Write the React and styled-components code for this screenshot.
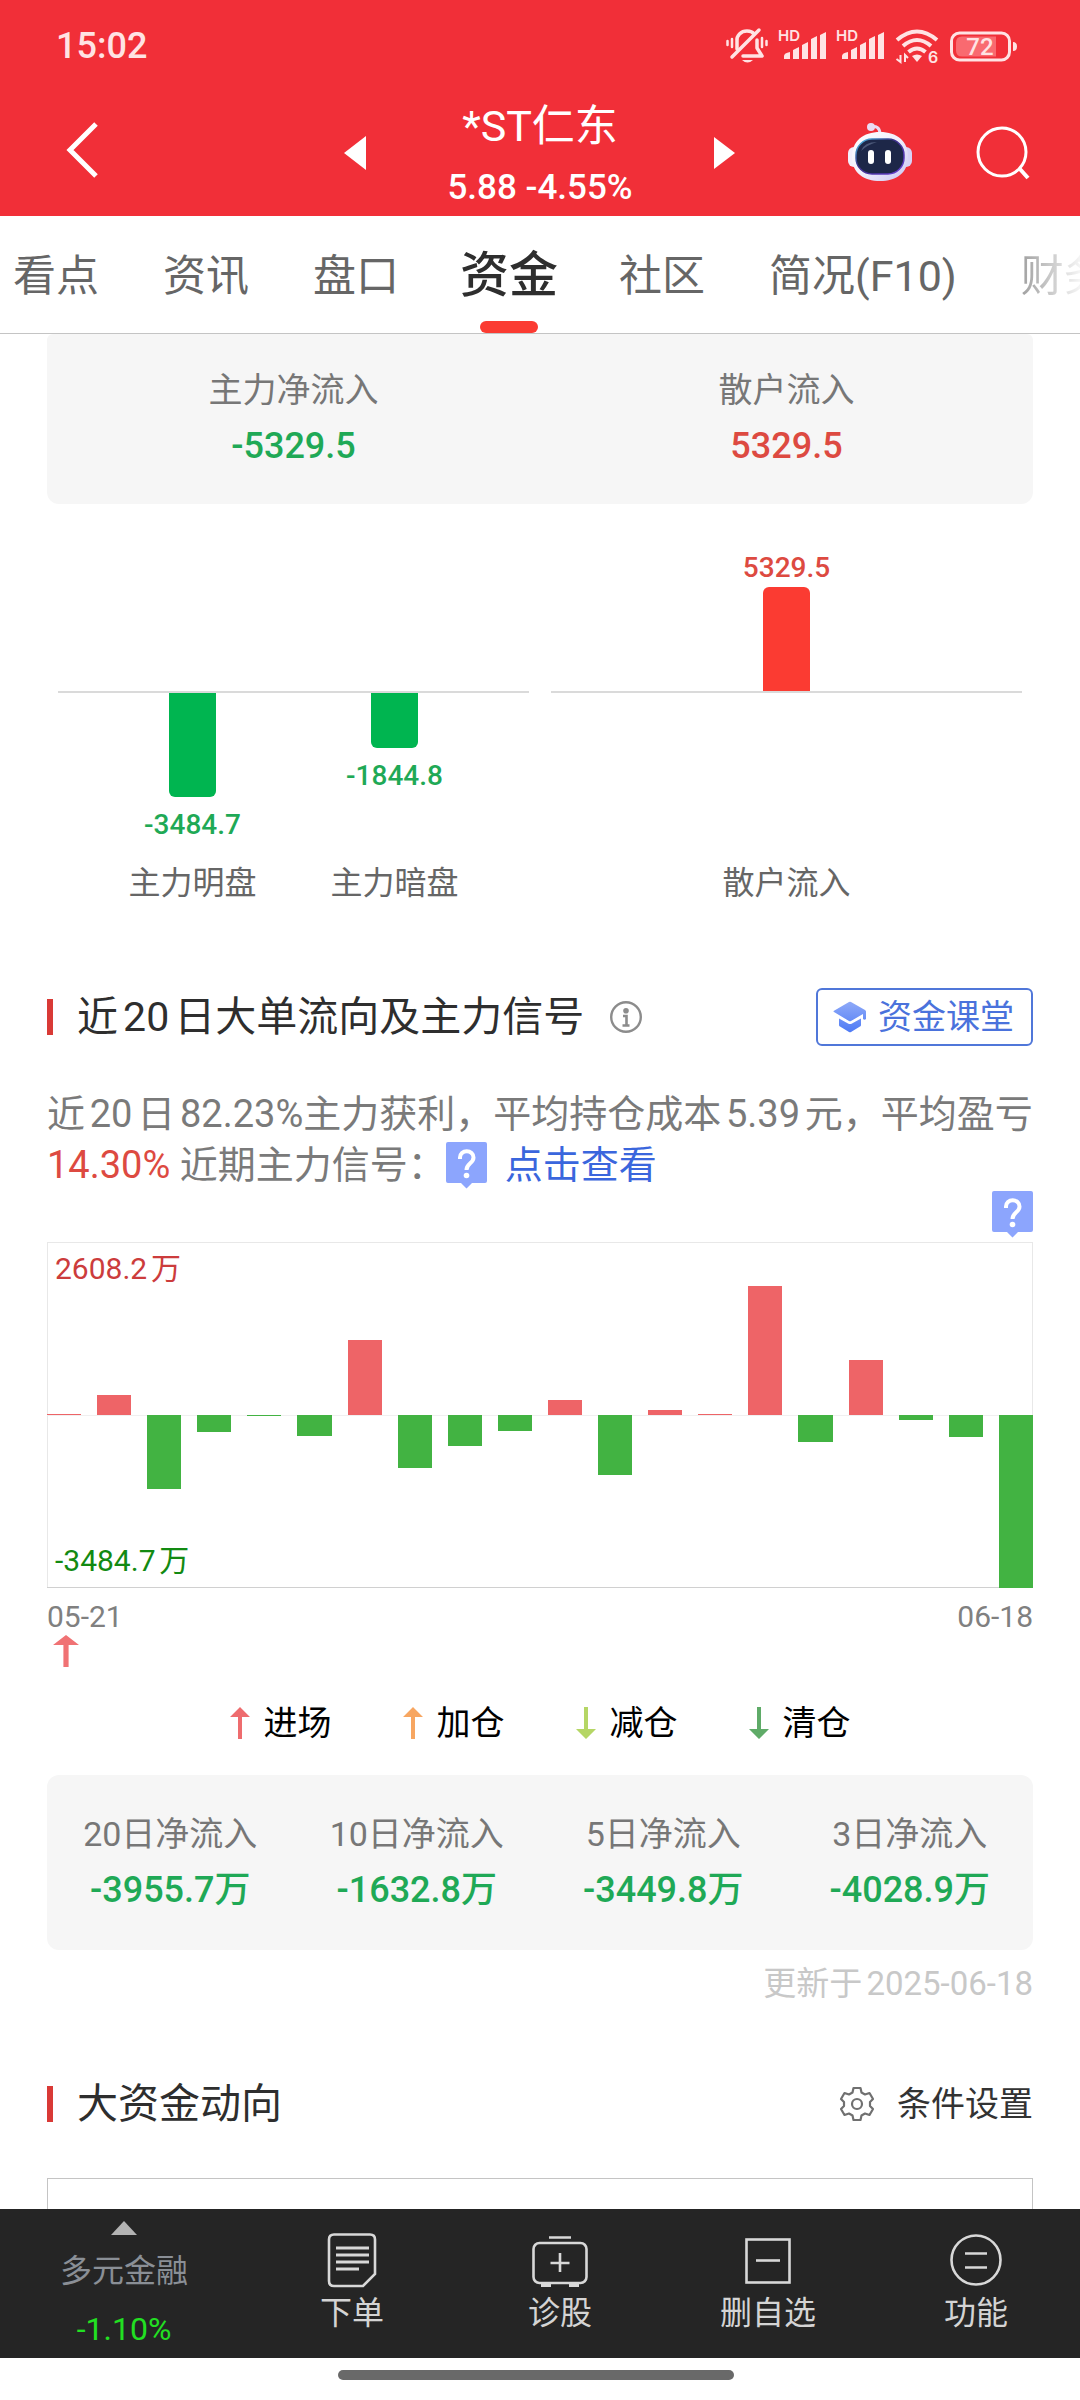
import React from 'react';
import styled, { createGlobalStyle, css } from 'styled-components';

const Global = createGlobalStyle`
  *, *::before, *::after { box-sizing: border-box; }
  body {
    margin: 0;
    background: #fff;
    color: #333;
    font-family: Roboto, "Noto Sans CJK SC", sans-serif;
  }
  button {
    margin: 0;
    padding: 0;
    border: 0;
    background: none;
    color: inherit;
    font: inherit;
    cursor: pointer;
  }
  a { color: inherit; text-decoration: none; }
  h1, h2, p { margin: 0; font-weight: 400; }
  svg { display: block; flex: none; overflow: visible; }
`;

const RED = '#dd4a41';
const GREEN = '#1fa956';

const Screen = styled.div`
  min-height: 100vh;
  display: flex;
  flex-direction: column;
`;

/* ---------- header ---------- */

const Header = styled.header`
  background: #f12f38;
  color: #fff;
`;

const StatusBar = styled.div`
  height: 92px;
  padding: 0 63px 0 56px;
  display: flex;
  align-items: center;
  justify-content: space-between;
  color: #ffe3e4;
`;

const Clock = styled.span`
  font-size: 36px;
  font-weight: 500;
  line-height: 40px;
`;

const StatusIcons = styled.div`
  display: flex;
  align-items: center;
  gap: 11px;
`;

const TitleBar = styled.div`
  height: 124px;
  display: grid;
  grid-template-columns: 1fr 392px 1fr;
  align-items: center;
`;

const TitleSide = styled.div`
  display: flex;
  align-items: center;
  gap: 64px;
  justify-content: ${(p) => (p.$end ? 'flex-end' : 'flex-start')};
  padding: ${(p) => (p.$end ? '0 50px 4px 0' : '0 0 6px 64px')};
`;

const StockSwitch = styled.div`
  display: flex;
  align-items: center;
  justify-content: space-between;
`;

const StockName = styled.h1`
  font-size: 43px;
  line-height: 68px;
  text-align: center;
`;

const StockPrice = styled.p`
  font-size: 35px;
  font-weight: 500;
  line-height: 56px;
  text-align: center;
`;

const Tabs = styled.nav`
  height: 118px;
  padding-left: 13px;
  display: flex;
  align-items: stretch;
  gap: 64px;
  overflow: hidden;
  border-bottom: 1px solid #c4c4c4;
`;

const Tab = styled.button`
  flex: none;
  position: relative;
  padding-top: 3px;
  color: #666;
  font-size: 43px;
  line-height: 114px;
  white-space: nowrap;
  ${(p) =>
    p.$active &&
    css`
      margin: 0 -3px;
      color: #2e2e2e;
      font-size: 49px;
      font-weight: 500;
      &::after {
        content: '';
        position: absolute;
        left: 50%;
        bottom: 0;
        width: 58px;
        height: 12px;
        margin-left: -29px;
        border-radius: 6px;
        background: #fb3b32;
      }
    `}
  ${(p) =>
    p.$faded &&
    css`
      background: linear-gradient(90deg, #a0a0a0, #fff 66px);
      background-clip: text;
      color: transparent;
    `}
`;

/* ---------- content ---------- */

const Content = styled.main`
  flex: 1;
  padding: 0 47px;
  display: flex;
  flex-direction: column;
`;

const StatCard = styled.section`
  display: grid;
  grid-auto-flow: column;
  grid-auto-columns: 1fr;
  padding: ${(p) => (p.$scrolled ? '28px 0 30px' : '31px 0 32px')};
  border-radius: ${(p) => (p.$scrolled ? '6px 6px 12px 12px' : '12px')};
  background: #f6f6f6;
  text-align: center;
`;

const StatLabel = styled.div`
  color: #777;
  font-size: 34px;
  line-height: 56px;
`;

const StatValue = styled.div`
  color: ${(p) => (p.$up ? RED : GREEN)};
  font-size: 36px;
  font-weight: 500;
  line-height: 56px;
`;

const SplitChart = styled.section`
  display: grid;
  grid-template-columns: 1fr 1fr;
  gap: 22px;
  padding: 0 11px;
`;

const Panel = styled.div`
  display: flex;
  flex-direction: column;
`;

const Half = styled.div`
  display: flex;
  justify-content: center;
  height: ${(p) => (p.$top ? 187 : 170)}px;
  align-items: ${(p) => (p.$top ? 'flex-end' : 'flex-start')};
  border-bottom: ${(p) => (p.$top ? '2px solid #dadada' : '0')};
  box-sizing: content-box;
`;

const PanelColumn = styled.div`
  width: 202px;
  display: flex;
  flex-direction: column;
  align-items: center;
  gap: ${(p) => (p.$top ? 2 : 11)}px;
  color: ${(p) => (p.$top ? RED : GREEN)};
  font-size: 28px;
  font-weight: 500;
  line-height: 34px;
`;

const FlowBar = styled.div`
  width: 47px;
  background: ${(p) => (p.$up ? '#fb3b32' : '#00b550')};
  border-radius: ${(p) => (p.$up ? '6px 6px 0 0' : '0 0 6px 6px')};
`;

const Categories = styled.div`
  display: flex;
  justify-content: center;
  color: #666;
  font-size: 32px;
  line-height: 40px;
  text-align: center;
`;

const Category = styled.span`
  width: 202px;
`;

const SectionHead = styled.div`
  display: flex;
  align-items: center;
  height: 58px;
  margin-top: ${(p) => p.$space}px;
`;

const SectionTitle = styled.h2`
  display: flex;
  align-items: center;
  gap: 24px;
  margin-right: 26px;
  color: #2e2e2e;
  font-size: 41px;
  line-height: 58px;
  text-autospace: normal;
  &::before {
    content: '';
    width: 6px;
    height: 36px;
    background: #d93a36;
  }
`;

const LessonButton = styled.button`
  margin-left: auto;
  height: 58px;
  padding: 0 17px 0 15px;
  display: flex;
  align-items: center;
  gap: 11px;
  border: 2px solid #5077d9;
  border-radius: 6px;
  color: #4a72dc;
  font-size: 34px;
  line-height: 52px;
`;

const SettingsButton = styled.button`
  margin-left: auto;
  display: flex;
  align-items: center;
  gap: 22px;
  color: #333;
  font-size: 34px;
  line-height: 52px;
`;

const Summary = styled.p`
  margin-top: 43px;
  color: #7a7a7a;
  font-size: 38px;
  line-height: 51px;
  text-autospace: normal;
`;

const Gain = styled.span`
  color: ${RED};
`;

const SignalLink = styled.a`
  margin-left: 18px;
  color: #3a66dd;
`;

const InlineBadge = styled.span`
  display: inline-block;
  height: 46px;
  vertical-align: -10px;
`;

const BadgeRow = styled.div`
  display: flex;
  justify-content: flex-end;
  margin-bottom: 5px;
`;

const DailyChart = styled.section`
  position: relative;
  height: 346px;
  display: grid;
  grid-template-columns: repeat(20, 1fr);
  column-gap: 16px;
  box-shadow: inset 0 -1px #d0d0d0, inset 0 0 0 1px #e8e8e8;
  &::before {
    content: '';
    position: absolute;
    left: 0;
    right: 0;
    top: 50%;
    border-top: 1px solid #f0f0f0;
  }
`;

const Day = styled.div`
  position: relative;
  display: grid;
  grid-template-rows: 1fr 1fr;
`;

const DayBar = styled.div`
  grid-row: ${(p) => (p.$up ? 1 : 2)};
  align-self: ${(p) => (p.$up ? 'end' : 'start')};
  min-height: 1px;
  background: ${(p) => (p.$up ? '#ee6467' : '#42b342')};
`;

const Extreme = styled.span`
  position: absolute;
  left: 8px;
  ${(p) => (p.$up ? 'top: 10px;' : 'bottom: 10px;')}
  color: ${(p) => (p.$up ? '#cc3c3c' : '#128a12')};
  font-size: 30px;
  line-height: 34px;
  text-autospace: normal;
`;

const DateRow = styled.div`
  display: flex;
  justify-content: space-between;
  margin-top: 12px;
  color: #808080;
  font-size: 30px;
  line-height: 34px;
`;

const Marker = styled.div`
  padding: 1px 0 0 6px;
`;

const Legend = styled.div`
  display: flex;
  justify-content: center;
  gap: 71px;
  margin: 32px 0 28px;
`;

const LegendItem = styled.span`
  display: flex;
  align-items: center;
  gap: 14px;
  color: #000;
  font-size: 34px;
  line-height: 48px;
`;

const Updated = styled.p`
  margin-top: 12px;
  color: #c8c8c8;
  font-size: 33px;
  line-height: 44px;
  text-align: right;
  text-autospace: normal;
`;

const NextPanel = styled.section`
  flex: 1;
  min-height: 30px;
  margin-top: 45px;
  border: 1px solid #c4c4c4;
  border-bottom: 0;
`;

/* ---------- footer ---------- */

const BottomBar = styled.footer`
  height: 149px;
  display: grid;
  grid-template-columns: 248fr repeat(4, 208fr);
  background: #252525;
  color: #d4d4d4;
`;

const Sector = styled.button`
  display: flex;
  flex-direction: column;
  align-items: center;
  padding-top: 12px;
  color: #8a8f96;
  font-size: 32px;
  line-height: 58px;
`;

const SectorName = styled.span`
  margin-top: 7px;
`;

const SectorChange = styled.span`
  color: #22e022;
`;

const Action = styled.button`
  display: flex;
  flex-direction: column;
  align-items: center;
  padding-top: 22px;
  font-size: 32px;
  line-height: 48px;
`;

const HomeArea = styled.div`
  height: 42px;
  padding: 12px 8px 0 0;
`;

const HomeBar = styled.div`
  width: 37%;
  height: 10px;
  margin: 0 auto;
  border-radius: 5px;
  background: #696969;
`;

/* ---------- icons ---------- */

const MutedBell = () => (
  <svg width="42" height="38" viewBox="0 0 42 38" fill="none" stroke="currentColor" strokeWidth="3.500" strokeLinecap="round" strokeLinejoin="round">
    <path d="M11 22V14a10 9 0 0 1 10-10q5 0 7 3" />
    <path d="M31 13v8l5 8H17" />
    <path d="M33 3 6 30" />
    <path d="M6 12v8M1.500 14v4M36 11v9M40.500 14v4" strokeWidth="2.500" />
    <path d="M16 33h11q-5.500 5-11 0Z" fill="currentColor" stroke="none" />
  </svg>
);

const HdText = styled.text`
  font-family: Inter, sans-serif;
  font-size: ${(p) => p.$size}px;
  font-weight: 600;
`;

const Signal = () => (
  <svg width="47" height="38" viewBox="0 0 47 38" fill="currentColor">
    <HdText $size={15} x="-1" y="14">HD</HdText>
    <path d="M5 32v-3q0-3 6-4v7zM14 32V23l6-3v12zM23 32V18l6-3v17zM32 32V12l6-3v23zM41 32V8l6-3v27z" />
  </svg>
);

const Wifi = () => (
  <svg width="44" height="38" viewBox="0 0 44 38" fill="none" stroke="currentColor" strokeWidth="4">
    <path d="M2 13q20-17 40 0" />
    <path d="M8 19q14-12 28 0" />
    <path d="M13.500 25q8.500-7 17 0" />
    <path d="M17 29q5-3 10 0l-5 6z" fill="currentColor" stroke="none" />
    <path d="M5.500 28v7l-4-3M10 35v-7l3 3" strokeWidth="2" />
    <HdText $size={16} x="33" y="36" fill="currentColor" stroke="none">6</HdText>
  </svg>
);

const BatteryText = styled.text`
  font-family: Roboto, sans-serif;
  font-size: 24px;
  font-weight: 500;
`;

const Battery = () => (
  <svg width="67" height="38" viewBox="0 0 67 38">
    <rect x="1.500" y="6" width="58" height="27" rx="8" fill="none" stroke="currentColor" strokeWidth="3" />
    <path d="M12 9.500h34v20H12q-6 0-6-6v-8q0-6 6-6Z" fill="#f96a70" />
    <path d="M63 15q4 0 4 4.500T63 24z" fill="currentColor" />
    <BatteryText x="30" y="28" textAnchor="middle" fill="currentColor">72</BatteryText>
  </svg>
);

const BackIcon = () => (
  <svg width="34" height="60" viewBox="0 0 34 60" fill="none" stroke="#fff" strokeWidth="5">
    <path d="M32 3 6 29l26 26" />
  </svg>
);

const Triangle = ({ right }) => (
  <svg width="22" height="36" viewBox="0 0 22 36" fill="#fff">
    <path d={right ? 'M0 1 21 17 0 33Z' : 'M22 0 0 17l22 17Z'} />
  </svg>
);

const Robot = () => (
  <svg width="64" height="60" viewBox="0 0 64 60">
    <defs>
      <linearGradient id="shell" x1="0" y1="0" x2="1" y2="1">
        <stop offset="0" stopColor="#ffffff" />
        <stop offset="0.5" stopColor="#f1effc" />
        <stop offset="1" stopColor="#c9c4f2" />
      </linearGradient>
      <linearGradient id="rim" x1="0" y1="0" x2="1" y2="1">
        <stop offset="0" stopColor="#49c4e6" />
        <stop offset="0.4" stopColor="#3a2f86" />
        <stop offset="1" stopColor="#6a3fd6" />
      </linearGradient>
    </defs>
    <path d="M23 5q8-2 9 6" fill="none" stroke="#eadcf4" strokeWidth="3" />
    <circle cx="23" cy="5" r="4" fill="#eadcf4" />
    <rect x="0" y="25" width="12" height="20" rx="6" fill="#f3effc" />
    <rect x="52" y="25" width="12" height="20" rx="6" fill="#d8d2f6" />
    <path d="M32 10c17 0 28 9 28 25S48 59 32 59 4 51 4 35s11-25 28-25Z" fill="url(#shell)" />
    <rect x="8" y="17" width="48" height="35" rx="16" fill="#1d2748" stroke="url(#rim)" strokeWidth="1.500" />
    <path d="M13 29q3-9 16-9-10 3-16 9Z" fill="#4b5878" />
    <rect x="20" y="28" width="6" height="14" rx="3" fill="#fff" />
    <rect x="37" y="28" width="6" height="14" rx="3" fill="#fff" />
  </svg>
);

const SearchIcon = () => (
  <svg width="54" height="60" viewBox="0 0 54 60" fill="none" stroke="#fff" strokeWidth="3">
    <circle cx="26" cy="30" r="24" />
    <path d="m43 46 9 10" strokeWidth="4" />
  </svg>
);

const InfoIcon = () => (
  <svg width="32" height="32" viewBox="0 0 32 32" fill="none" stroke="#8c8c8c">
    <circle cx="16" cy="16" r="14.800" strokeWidth="2.400" />
    <circle cx="16" cy="9.800" r="2.800" fill="#8c8c8c" stroke="none" />
    <path d="M13 15h3.500v9M12.500 24.500h7" strokeWidth="2.600" />
  </svg>
);

const CapIcon = () => (
  <svg width="34" height="32" viewBox="0 0 34 32">
    <defs>
      <linearGradient id="cap" x1="0" y1="0" x2="0" y2="1">
        <stop offset="0" stopColor="#8faaf8" />
        <stop offset="1" stopColor="#4f7bf5" />
      </linearGradient>
    </defs>
    <path
      d="M16 1q1-.5 2 0l14 8q1 .6 1 1.600V18q-1.500 1.500-3 0v-5l-12 7q-1 .5-2 0L1 11q-1-.6 0-1.200ZM6 17.500l9 5q2 1 4 0l9-5V24q0 1-1 1.600l-9 5.400q-1 .5-2 0l-9-5.400Q6 25 6 24Z"
      fill="url(#cap)"
    />
  </svg>
);

const Badge = () => (
  <svg width="41" height="46" viewBox="0 0 41 46">
    <path d="M2 0h37q2 0 2 2v37q0 2-2 2H26l-5.500 5.500L15 41H2q-2 0-2-2V2q0-2 2-2Z" fill="#8ca5fd" />
    <path d="M14 17v-1.500a6.500 6 0 0 1 13.500 0c0 6-7 5.500-7 12.500" fill="none" stroke="#fff" strokeWidth="4" />
    <circle cx="20.500" cy="33.500" r="2.800" fill="#fff" />
  </svg>
);

const Arrow = ({ color, down, width = 20 }) => (
  <svg width={width} height="32" viewBox="0 0 20 32" preserveAspectRatio="none" fill={color}>
    <path d={down ? 'M8 0h4v22h8L10 32 0 22h8Z' : 'M10 0l10 10h-8v22H8V10H0Z'} />
  </svg>
);

const GearIcon = () => (
  <svg width="36" height="36" viewBox="0 0 36 36" fill="none" stroke="#707070" strokeWidth="2.200" strokeLinejoin="round">
    <path d="M14.500 2h7l1 4.500 3.500 2 4.500-1.500 3.500 6-3 3v4l3 3-3.500 6-4.500-1.500-3.500 2-1 4.500h-7l-1-4.500-3.500-2L5.500 29 2 23l3-3v-4l-3-3 3.500-6L10 8.500l3.500-2Z" />
    <circle cx="18" cy="18" r="5" />
  </svg>
);

const UpMark = () => (
  <svg width="26" height="14" viewBox="0 0 26 14" fill="#b3b3b3">
    <path d="M13 0 26 14H0Z" />
  </svg>
);

const LineIcon = ({ children }) => (
  <svg width="58" height="58" viewBox="0 0 58 58" fill="none" stroke="#d8d8d8" strokeWidth="2.600">
    {children}
  </svg>
);

const ACTIONS = [
  {
    label: '下单',
    icon: (
      <>
        <path d="M11 3.500h36q5 0 5 5V43L40 55H11q-5 0-5-5V8.500q0-5 5-5Z" />
        <path d="M13 17h33M13 24h33M13 31h33M13 38h23" strokeWidth="3" />
      </>
    ),
  },
  {
    label: '诊股',
    icon: (
      <>
        <rect x="2.500" y="12" width="53" height="40" rx="6" />
        <path d="M18 6.500h22M29 22v19M19.500 32h19" />
        <path d="M10 54h10M38 54h10" strokeWidth="4" />
      </>
    ),
  },
  {
    label: '删自选',
    icon: (
      <>
        <rect x="7.500" y="8.500" width="43" height="43" />
        <path d="M17 29.500h24" />
      </>
    ),
  },
  {
    label: '功能',
    icon: (
      <>
        <circle cx="29" cy="29" r="24.500" />
        <path d="M18 22.500h22M18 36.500h22" />
      </>
    ),
  },
];

/* ---------- data ---------- */

const TABS = ['看点', '资讯', '盘口', '资金', '社区', '简况(F10)', '财务'];

const FLOWS = [
  { name: '主力明盘', value: '-3484.7', size: 104 },
  { name: '主力暗盘', value: '-1844.8', size: 55 },
];

const DAYS = [10, 403, -1490, -345, -10, -415, 1520, -1065, -625, -315, 300, -1200, 95, 15, 2608, -535, 1105, -95, -450, -3485];
const DAY_MAX = 3485;

const LEGEND = [
  { name: '进场', color: '#ee6c6e' },
  { name: '加仓', color: '#f7a661' },
  { name: '减仓', color: '#b5d665', down: true },
  { name: '清仓', color: '#5fab68', down: true },
];

const TOTALS = [
  ['20日净流入', '-3955.7万'],
  ['10日净流入', '-1632.8万'],
  ['5日净流入', '-3449.8万'],
  ['3日净流入', '-4028.9万'],
];

export default function App() {
  return (
    <Screen>
      <Global />
      <Header>
        <StatusBar>
          <Clock>15:02</Clock>
          <StatusIcons>
            <MutedBell />
            <Signal />
            <Signal />
            <Wifi />
            <Battery />
          </StatusIcons>
        </StatusBar>
        <TitleBar>
          <TitleSide>
            <button type="button" aria-label="返回"><BackIcon /></button>
          </TitleSide>
          <StockSwitch>
            <button type="button" aria-label="上一只"><Triangle /></button>
            <div>
              <StockName>*ST仁东</StockName>
              <StockPrice>5.88 -4.55%</StockPrice>
            </div>
            <button type="button" aria-label="下一只"><Triangle right /></button>
          </StockSwitch>
          <TitleSide $end>
            <button type="button" aria-label="助手"><Robot /></button>
            <button type="button" aria-label="搜索"><SearchIcon /></button>
          </TitleSide>
        </TitleBar>
      </Header>

      <Tabs>
        {TABS.map((tab) => (
          <Tab key={tab} type="button" $active={tab === '资金'} $faded={tab === '财务'}>{tab}</Tab>
        ))}
      </Tabs>

      <Content>
        <StatCard $scrolled>
          <div>
            <StatLabel>主力净流入</StatLabel>
            <StatValue>-5329.5</StatValue>
          </div>
          <div>
            <StatLabel>散户流入</StatLabel>
            <StatValue $up>5329.5</StatValue>
          </div>
        </StatCard>

        <SplitChart>
          <Panel>
            <Half $top />
            <Half>
              {FLOWS.map((flow) => (
                <PanelColumn key={flow.name}>
                  <FlowBar style={{ height: flow.size }} />
                  {flow.value}
                </PanelColumn>
              ))}
            </Half>
            <Categories>
              {FLOWS.map((flow) => <Category key={flow.name}>{flow.name}</Category>)}
            </Categories>
          </Panel>
          <Panel>
            <Half $top>
              <PanelColumn $top>
                5329.5
                <FlowBar $up style={{ height: 104 }} />
              </PanelColumn>
            </Half>
            <Half />
            <Categories><Category>散户流入</Category></Categories>
          </Panel>
        </SplitChart>

        <SectionHead $space={85}>
          <SectionTitle>近20日大单流向及主力信号</SectionTitle>
          <InfoIcon />
          <LessonButton type="button"><CapIcon />资金课堂</LessonButton>
        </SectionHead>

        <Summary>
          近20日82.23%主力获利，平均持仓成本5.39元，平均盈亏<Gain>14.30%</Gain> 近期主力信号：
          <InlineBadge><Badge /></InlineBadge>
          <SignalLink href="#signal">点击查看</SignalLink>
        </Summary>

        <BadgeRow><Badge /></BadgeRow>

        <DailyChart>
          {DAYS.map((value, i) => (
            <Day key={i}>
              <DayBar $up={value > 0} style={{ height: `${(Math.abs(value) / DAY_MAX) * 100}%` }} />
            </Day>
          ))}
          <Extreme $up>2608.2万</Extreme>
          <Extreme>-3484.7万</Extreme>
        </DailyChart>
        <DateRow><span>05-21</span><span>06-18</span></DateRow>
        <Marker><Arrow color="#f07274" width={26} /></Marker>

        <Legend>
          {LEGEND.map((item) => (
            <LegendItem key={item.name}><Arrow color={item.color} down={item.down} />{item.name}</LegendItem>
          ))}
        </Legend>

        <StatCard>
          {TOTALS.map(([label, value]) => (
            <div key={label}>
              <StatLabel>{label}</StatLabel>
              <StatValue>{value}</StatValue>
            </div>
          ))}
        </StatCard>
        <Updated>更新于2025-06-18</Updated>

        <SectionHead $space={69}>
          <SectionTitle>大资金动向</SectionTitle>
          <SettingsButton type="button"><GearIcon />条件设置</SettingsButton>
        </SectionHead>
        <NextPanel />
      </Content>

      <BottomBar>
        <Sector type="button">
          <UpMark />
          <SectorName>多元金融</SectorName>
          <SectorChange>-1.10%</SectorChange>
        </Sector>
        {ACTIONS.map((action) => (
          <Action key={action.label} type="button">
            <LineIcon>{action.icon}</LineIcon>
            {action.label}
          </Action>
        ))}
      </BottomBar>
      <HomeArea><HomeBar /></HomeArea>
    </Screen>
  );
}
